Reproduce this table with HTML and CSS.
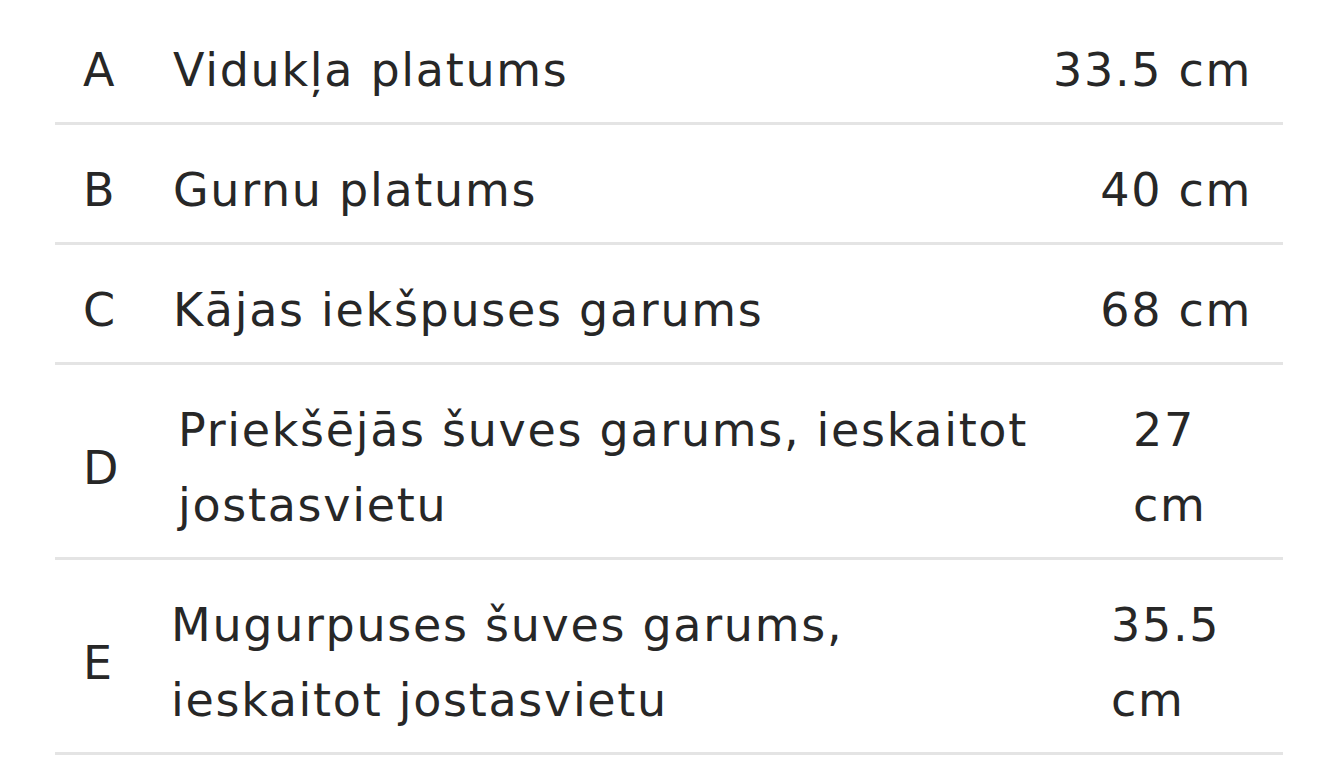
FILE: index.html
```html
<!DOCTYPE html>
<html lang="lv">
<head>
<meta charset="utf-8">
<title>Izmēri</title>
<link rel="stylesheet" href="styles.css">
</head>
<body>
<div class="size-table">
  <div class="row row-single">
    <span class="key">A</span>
    <span class="label">Vidukļa platums</span>
    <span class="value">33.5 cm</span>
  </div>
  <div class="row row-single">
    <span class="key">B</span>
    <span class="label">Gurnu platums</span>
    <span class="value">40 cm</span>
  </div>
  <div class="row row-single">
    <span class="key">C</span>
    <span class="label">Kājas iekšpuses garums</span>
    <span class="value">68 cm</span>
  </div>
  <div class="row row-double row-d">
    <span class="key">D</span>
    <span class="label">Priekšējās šuves garums, ieskaitot jostasvietu</span>
    <span class="value value-stack">27 cm</span>
  </div>
  <div class="row row-double row-e">
    <span class="key">E</span>
    <span class="label">Mugurpuses šuves garums, ieskaitot jostasvietu</span>
    <span class="value value-stack">35.5 cm</span>
  </div>
</div>
</body>
</html>
```

FILE: styles.css
```css
html, body {
  margin: 0;
  padding: 0;
  background: #ffffff;
}

body {
  font-family: "DejaVu Sans", "Liberation Sans", sans-serif;
  font-size: 46px;
  line-height: 75px;
  letter-spacing: 1.7px;
  color: #272727;
}

.size-table {
  padding: 5px 54px 0 55px;
}

.row {
  display: grid;
  align-items: center;
  padding: 28px 0 14px;
  border-bottom: 3px solid #e4e4e4;
}

.row-single {
  grid-template-columns: 118px 1fr auto;
}

.row-d {
  grid-template-columns: 123px 1fr 150px;
}

.row-e {
  grid-template-columns: 116px 1fr 172px;
}

.key {
  padding-left: 28px;
}

.row-d .label {
  padding-right: 40px;
}

.row-e .label {
  padding-right: 200px;
}

.row-single .value {
  padding-right: 31px;
  text-align: right;
}

.value-stack {
  width: min-content;
}
```
